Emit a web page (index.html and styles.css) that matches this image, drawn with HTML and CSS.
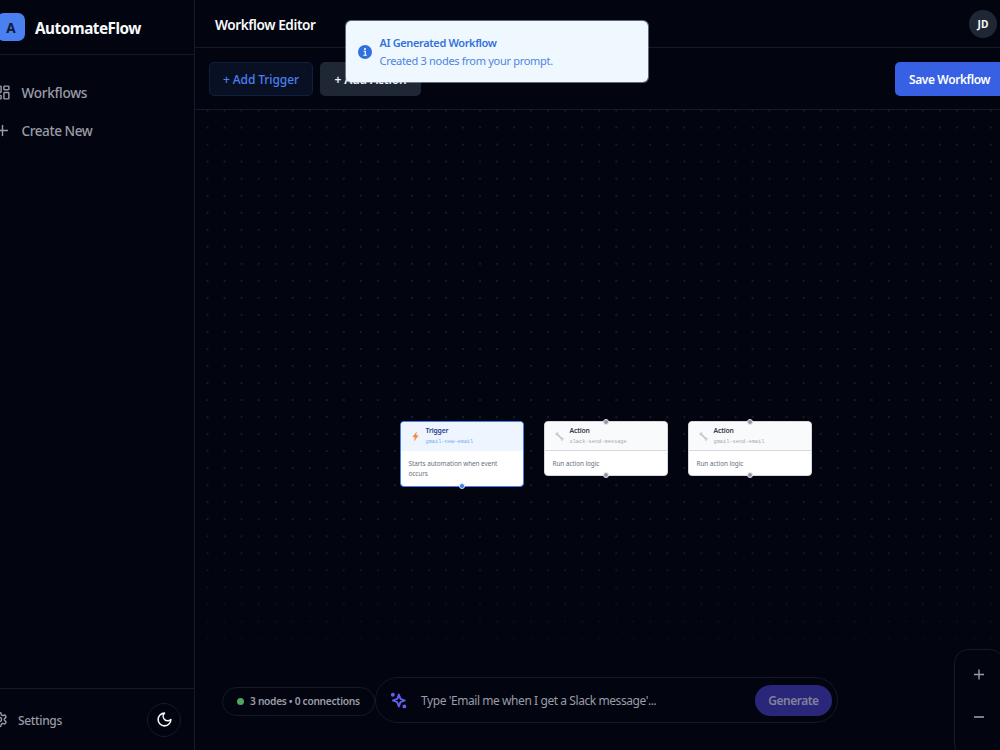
FILE: index.html
```html
<!DOCTYPE html>
<html lang="en">
<head>
    <meta charset="UTF-8">
    <meta name="viewport" content="width=device-width, initial-scale=1.0">
    <title>AutomateFlow</title>
    <link rel="stylesheet" href="styles.css">
</head>
<body>
    <div class="app">
        <aside class="sidebar">
            <div class="brand">
                <div class="brand-logo">A</div>
                <span class="brand-name">AutomateFlow</span>
            </div>
            <nav class="nav">
                <a class="nav-item">
                    <svg width="17" height="17" viewBox="0 0 24 24" fill="none" stroke="currentColor" stroke-width="2" stroke-linecap="round" stroke-linejoin="round">
                        <rect x="3" y="3" width="7" height="9" rx="1"></rect>
                        <rect x="14" y="3" width="7" height="5" rx="1"></rect>
                        <rect x="14" y="12" width="7" height="9" rx="1"></rect>
                        <rect x="3" y="16" width="7" height="5" rx="1"></rect>
                    </svg>
                    <span>Workflows</span>
                </a>
                <a class="nav-item">
                    <svg width="17" height="17" viewBox="0 0 24 24" fill="none" stroke="currentColor" stroke-width="2" stroke-linecap="round">
                        <path d="M5 12h14M12 5v14"></path>
                    </svg>
                    <span class="nav-create">Create New</span>
                </a>
            </nav>
            <div class="sidebar-footer">
                <a class="settings">
                    <svg width="17" height="17" viewBox="0 0 24 24" fill="none" stroke="currentColor" stroke-width="2" stroke-linecap="round" stroke-linejoin="round">
                        <path d="M12.22 2h-.44a2 2 0 0 0-2 2v.18a2 2 0 0 1-1 1.73l-.43.25a2 2 0 0 1-2 0l-.15-.08a2 2 0 0 0-2.73.73l-.22.38a2 2 0 0 0 .73 2.73l.15.1a2 2 0 0 1 1 1.72v.51a2 2 0 0 1-1 1.74l-.15.09a2 2 0 0 0-.73 2.73l.22.38a2 2 0 0 0 2.73.73l.15-.08a2 2 0 0 1 2 0l.43.25a2 2 0 0 1 1 1.73V20a2 2 0 0 0 2 2h.44a2 2 0 0 0 2-2v-.18a2 2 0 0 1 1-1.73l.43-.25a2 2 0 0 1 2 0l.15.08a2 2 0 0 0 2.73-.73l.22-.39a2 2 0 0 0-.73-2.73l-.15-.08a2 2 0 0 1-1-1.74v-.5a2 2 0 0 1 1-1.74l.15-.09a2 2 0 0 0 .73-2.73l-.22-.38a2 2 0 0 0-2.73-.73l-.15.08a2 2 0 0 1-2 0l-.43-.25a2 2 0 0 1-1-1.73V4a2 2 0 0 0-2-2z"></path>
                        <circle cx="12" cy="12" r="3"></circle>
                    </svg>
                    <span>Settings</span>
                </a>
                <button class="theme-toggle">
                    <svg width="17" height="17" viewBox="0 0 24 24" fill="none" stroke="currentColor" stroke-width="2.2" stroke-linecap="round" stroke-linejoin="round">
                        <path d="M12 3a6 6 0 0 0 9 9 9 9 0 1 1-9-9Z"></path>
                    </svg>
                </button>
            </div>
        </aside>

        <main class="main">
            <header class="topbar">
                <h1>Workflow Editor</h1>
                <div class="avatar">JD</div>
            </header>
            <div class="toolbar">
                <button class="btn btn-trigger">+ Add Trigger</button>
                <button class="btn btn-action">+ Add Action</button>
                <button class="btn btn-save">Save Workflow</button>
            </div>
            <section class="canvas">
                <div class="node node-trigger">
                    <div class="node-head">
                        <svg class="node-icon" width="9" height="11" viewBox="0 0 9 11">
                            <path d="M5.8 .4 1.4 6l2.5.2L2.8 10.6 7.7 4.6 5.2 4.3z" fill="#ee8b4a"></path>
                        </svg>
                        <div>
                            <div class="node-title">Trigger</div>
                            <div class="node-id">gmail-new-email</div>
                        </div>
                    </div>
                    <p class="node-text">Starts automation when event occurs</p>
                    <span class="handle handle-bottom"></span>
                </div>
                <div class="node node-slack">
                    <div class="node-head">
                        <svg class="node-icon" width="9" height="9" viewBox="0 0 9 9" fill="none" stroke="#c9c0d8" stroke-linecap="round">
                            <path d="M2.4 2.4l4.2 4.2" stroke-width="1.6"></path>
                            <path d="M.8 2.2c.8 1 2 .2 1.5-1.5M8.2 6.8c-.8-1-2-.2-1.5 1.5" stroke-width="1.3"></path>
                        </svg>
                        <div>
                            <div class="node-title">Action</div>
                            <div class="node-id">slack-send-message</div>
                        </div>
                    </div>
                    <p class="node-text">Run action logic</p>
                    <span class="handle handle-top"></span>
                    <span class="handle handle-bottom"></span>
                </div>
                <div class="node node-gmail">
                    <div class="node-head">
                        <svg class="node-icon" width="9" height="9" viewBox="0 0 9 9" fill="none" stroke="#c9c0d8" stroke-linecap="round">
                            <path d="M2.4 2.4l4.2 4.2" stroke-width="1.6"></path>
                            <path d="M.8 2.2c.8 1 2 .2 1.5-1.5M8.2 6.8c-.8-1-2-.2-1.5 1.5" stroke-width="1.3"></path>
                        </svg>
                        <div>
                            <div class="node-title">Action</div>
                            <div class="node-id">gmail-send-email</div>
                        </div>
                    </div>
                    <p class="node-text">Run action logic</p>
                    <span class="handle handle-top"></span>
                    <span class="handle handle-bottom"></span>
                </div>

                <div class="dock">
                    <div class="status"><i class="status-dot"></i><span>3 nodes • 0 connections</span></div>
                    <div class="prompt">
                        <svg width="17" height="17" viewBox="0 0 24 24" fill="none" stroke="currentColor" stroke-width="2.6" stroke-linejoin="round">
                            <path d="M12.5 3.5l2.3 6.2 6.2 2.3-6.2 2.3-2.3 6.2-2.3-6.2L4 12l6.2-2.3z"></path>
                            <circle cx="4" cy="4" r="1.5" fill="currentColor"></circle>
                            <circle cx="20.3" cy="20.3" r="1.5" fill="currentColor"></circle>
                        </svg>
                        <span class="prompt-text">Type 'Email me when I get a Slack message'...</span>
                        <button class="generate">Generate</button>
                    </div>
                </div>

                <div class="zoom-panel">
                    <svg width="12" height="12" viewBox="0 0 12 12" stroke="currentColor" stroke-width="1.4"><path d="M1 5.5h10M6 .5v10"></path></svg>
                    <svg width="12" height="12" viewBox="0 0 12 12" stroke="currentColor" stroke-width="1.6"><path d="M1 6h10"></path></svg>
                </div>
            </section>
        </main>
    </div>

    <div class="toast">
        <svg width="14" height="14" viewBox="0 0 14 14">
            <circle cx="7" cy="7" r="7" fill="#3070df"></circle>
            <circle cx="7" cy="3.9" r="1" fill="#fff"></circle>
            <path d="M5.6 6.2h1.7v3.9M5.4 10.3h3.4" stroke="#fff" stroke-width="1.1" fill="none"></path>
        </svg>
        <div>
            <div class="toast-title">AI Generated Workflow</div>
            <div class="toast-text">Created 3 nodes from your prompt.</div>
        </div>
    </div>
</body>
</html>
```
FILE: styles.css
```css
:root {
    --bg: #02040f;
    --border: #161a27;
    --muted: #9a9ca7;
    --blue: #4b80f0;
}
* {
    margin: 0;
    padding: 0;
    box-sizing: border-box;
}
body {
    font-family: 'Noto Sans', 'Open Sans', sans-serif;
    background-color: var(--bg);
    color: #f8fafc;
    height: 100vh;
    overflow: hidden;
}
button {
    font-family: inherit;
    border: none;
}
svg {
    flex-shrink: 0;
}
.app {
    display: flex;
    width: 1034px;
    height: 750px;
    margin-left: -17px;
}

/* sidebar */
.sidebar {
    width: 212px;
    flex-shrink: 0;
    border-right: 1px solid var(--border);
    display: flex;
    flex-direction: column;
}
.brand {
    height: 55px;
    padding-left: 14px;
    display: flex;
    align-items: center;
    gap: 10px;
    border-bottom: 1px solid var(--border);
}
.brand-logo {
    width: 28px;
    height: 28px;
    border-radius: 7px;
    background: var(--blue);
    color: #111a38;
    font-size: 13.6px;
    font-weight: 700;
    line-height: 29px;
    text-align: center;
}
.brand-name {
    padding-top: 2px;
    font-size: 15.3px;
    font-weight: 700;
    letter-spacing: -0.5px;
}
.nav {
    flex: 1;
    padding: 19px 11px;
    color: var(--muted);
}
.nav-item {
    display: flex;
    align-items: center;
    gap: 10.5px;
    height: 37.5px;
    font-size: 13.6px;
    font-weight: 500;
    letter-spacing: -0.3px;
}
.nav-create {
    letter-spacing: -0.45px;
}
.sidebar-footer {
    height: 62px;
    border-top: 1px solid var(--border);
    padding: 0 13px 0 8px;
    display: flex;
    align-items: center;
    justify-content: space-between;
    color: var(--muted);
}
.settings {
    display: flex;
    align-items: center;
    gap: 10px;
    font-size: 12px;
    font-weight: 500;
    letter-spacing: -0.35px;
}
.settings span {
    padding-top: 2px;
}
.theme-toggle {
    width: 34px;
    height: 34px;
    border-radius: 50%;
    border: 1px solid var(--border);
    background: none;
    color: #f8fafc;
    display: flex;
    align-items: center;
    justify-content: center;
}

/* main */
.main {
    flex: 1;
    display: flex;
    flex-direction: column;
}
.topbar {
    height: 48px;
    padding: 0 20px;
    border-bottom: 1px solid var(--border);
    display: flex;
    align-items: center;
    justify-content: space-between;
}
.topbar h1 {
    padding-top: 2px;
    font-size: 13.6px;
    font-weight: 600;
    letter-spacing: -0.4px;
}
.avatar {
    width: 28px;
    height: 28px;
    border-radius: 50%;
    background: #202734;
    font-size: 10.2px;
    font-weight: 700;
    line-height: 28px;
    text-align: center;
}
.toolbar {
    height: 62px;
    padding: 0 13px 0 14px;
    border-bottom: 1px solid var(--border);
    display: flex;
    align-items: center;
    gap: 7px;
}
.btn {
    height: 34px;
    padding-top: 2px;
    border-radius: 5px;
    font-size: 12px;
    white-space: nowrap;
}
.btn-trigger {
    width: 104px;
    background: #0a1024;
    border: 1px solid #121e40;
    color: var(--blue);
    font-weight: 500;
    letter-spacing: -0.1px;
}
.btn-action {
    width: 101px;
    background: #202734;
    color: #f1f3f7;
    font-weight: 600;
    letter-spacing: -0.15px;
}
.btn-save {
    width: 109px;
    margin-left: auto;
    background: #3760e4;
    color: #fff;
    font-weight: 600;
    letter-spacing: -0.4px;
}

/* canvas */
.canvas {
    flex: 1;
    position: relative;
    background-image: linear-gradient(to bottom, transparent 420px, var(--bg) 575px), radial-gradient(circle, #252936 0.5px, transparent 1px);
    background-size: 100% 100%, 17.04px 17.04px;
    background-position: 0 0, 4px -8px;
}
.node {
    position: absolute;
    width: 124px;
    background: #fff;
    border: 1px solid #d5d7dd;
    border-radius: 4px;
}
.node-trigger {
    left: 205px;
    top: 311px;
    height: 66px;
    border-color: #4b7fe8;
}
.node-slack {
    left: 349px;
    top: 311px;
    height: 55px;
}
.node-gmail {
    left: 493px;
    top: 311px;
    height: 55px;
}
.node-head {
    height: 29px;
    padding-left: 10px;
    display: flex;
    align-items: center;
    gap: 5.5px;
    background: #f9fafc;
    border-bottom: 1px solid #d5d7dd;
    border-radius: 3px 3px 0 0;
}
.node-trigger .node-head {
    background: #eef5fe;
    border-color: #eef5fe;
}
.node-title {
    font-size: 6.8px;
    font-weight: 600;
    line-height: 10px;
    letter-spacing: -0.15px;
    color: #343b4c;
}
.node-trigger .node-title {
    color: #283b90;
}
.node-id {
    font-family: 'Liberation Mono', monospace;
    font-size: 5.3px;
    line-height: 9px;
    padding-top: 2px;
    color: #a3a7b0;
}
.node-trigger .node-id {
    color: #74a7f2;
}
.node-text {
    padding: 8px 7.5px 0;
    font-size: 6.4px;
    line-height: 10px;
    letter-spacing: -0.06px;
    color: #6a707d;
}
.handle {
    position: absolute;
    left: 58px;
    width: 6px;
    height: 6px;
    border-radius: 50%;
    background: #9096a4;
    border: 1px solid #e8e9ee;
}
.handle-top {
    top: -3px;
}
.handle-bottom {
    bottom: -3px;
}
.node-trigger .handle {
    background: #3b7cf0;
}

/* prompt bar, floats over the canvas */
.dock {
    position: absolute;
    left: 27px;
    bottom: 27px;
    display: flex;
    align-items: center;
}
.status {
    width: 153px;
    height: 29px;
    margin-top: 2px;
    border: 1px solid var(--border);
    border-radius: 15px;
    padding-left: 13.5px;
    display: flex;
    align-items: center;
    gap: 6.5px;
    font-size: 10.2px;
    font-weight: 600;
    letter-spacing: -0.3px;
    color: var(--muted);
    white-space: nowrap;
}
.status-dot {
    width: 7px;
    height: 7px;
    border-radius: 50%;
    background: #4fa65c;
}
.prompt {
    width: 463px;
    height: 46px;
    border: 1px solid var(--border);
    border-radius: 23px;
    padding: 0 5px 0 14px;
    display: flex;
    align-items: center;
    background: var(--bg);
}
.prompt svg {
    color: #6261ee;
}
.prompt-text {
    margin-left: 14px;
    font-size: 12px;
    letter-spacing: -0.43px;
    color: var(--muted);
    white-space: nowrap;
}
.generate {
    width: 77px;
    height: 31px;
    margin-left: auto;
    border-radius: 16px;
    background: #2a267a;
    color: #80819a;
    font-size: 12px;
    font-weight: 600;
    letter-spacing: -0.5px;
}
.zoom-panel {
    position: absolute;
    left: 759px;
    bottom: -8px;
    width: 50px;
    height: 109px;
    border: 1px solid var(--border);
    border-radius: 14px;
    padding-top: 19px;
    display: flex;
    flex-direction: column;
    align-items: center;
    gap: 30px;
    color: var(--muted);
}

/* toast */
.toast {
    position: absolute;
    left: 345px;
    top: 20px;
    width: 304px;
    height: 63px;
    padding-left: 12px;
    display: flex;
    align-items: center;
    gap: 7.5px;
    background: #f0f8ff;
    background-clip: padding-box;
    border: 1px solid rgba(190, 205, 230, 0.5);
    border-radius: 6px;
    color: #3472dc;
    font-size: 11px;
    line-height: 17.5px;
}
.toast-title {
    font-weight: 600;
    letter-spacing: -0.38px;
}
.toast-text {
    color: #4b85e2;
    letter-spacing: -0.3px;
}
```
